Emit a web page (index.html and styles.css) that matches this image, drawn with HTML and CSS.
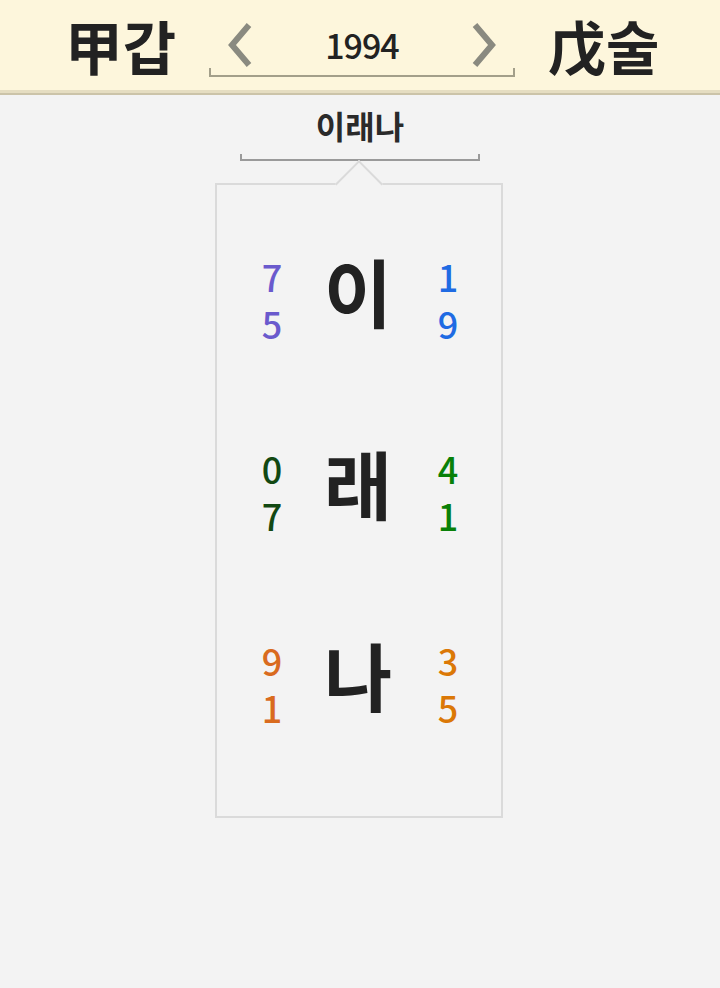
FILE: index.html
```html
<!DOCTYPE html>
<html lang="ko">
<head>
  <meta charset="utf-8">
  <title>이름 풀이</title>
  <link rel="stylesheet" href="styles.css">
</head>
<body>

<!-- Year header -->
<header class="top">
  <div class="ganji">甲갑</div>
  <div class="year-nav">
    <svg class="arrow" width="30" height="46" viewBox="0 0 30 46"><polyline points="24,3 7,23 24,43" /></svg>
    <span class="year">1994</span>
    <svg class="arrow" width="30" height="46" viewBox="0 0 30 46"><polyline points="6,3 23,23 6,43" /></svg>
  </div>
  <div class="ganji">戊술</div>
</header>

<!-- Name -->
<section class="name-block">
  <h1 class="name">이래나</h1>
  <div class="name-bracket"></div>

  <div class="card">
    <span class="notch"></span>

    <div class="row">
      <div class="nums c-purple"><span>7</span><span>5</span></div>
      <div class="char">이</div>
      <div class="nums c-blue"><span>1</span><span>9</span></div>
    </div>

    <div class="row">
      <div class="nums c-darkgreen"><span>0</span><span>7</span></div>
      <div class="char">래</div>
      <div class="nums c-green"><span>4</span><span>1</span></div>
    </div>

    <div class="row">
      <div class="nums c-orange"><span>9</span><span>1</span></div>
      <div class="char">나</div>
      <div class="nums c-amber"><span>3</span><span>5</span></div>
    </div>
  </div>
</section>

</body>
</html>
```

FILE: styles.css
```css
body {
  margin: 0;
  background: #f3f3f3;
  color: #222;
  font-family: "Noto Sans CJK KR", "Noto Sans", sans-serif;
}

/* header */
.top {
  height: 90px;
  background: #fdf6dc;
  border-bottom: 3px solid #e5ddc1;
  box-shadow: 0 2px 0 #cbc3a8;
  display: flex;
  justify-content: center;
  align-items: center;
  gap: 33px;
  padding-left: 4px;
}
.ganji {
  font-size: 58px;
  font-weight: 700;
  line-height: 1;
}
.year-nav {
  position: relative;
  width: 306px;
  height: 58px;
  margin-top: 6px;
  display: flex;
  align-items: center;
  justify-content: space-between;
  padding: 0 16px;
  box-sizing: border-box;
}
.year-nav::after {
  content: "";
  position: absolute;
  left: 0;
  right: 0;
  bottom: 0;
  height: 7px;
  border: 2px solid #a39f8a;
  border-top: none;
}
.arrow {
  margin-top: -6px;
}
.arrow polyline {
  fill: none;
  stroke: #8a8a80;
  stroke-width: 6;
}
.year {
  font-size: 34px;
  font-weight: 500;
  line-height: 1;
  margin-top: -6px;
  letter-spacing: -1px;
}

/* name */
.name-block {
  display: flex;
  flex-direction: column;
  align-items: center;
  padding-top: 12px;
}
.name {
  margin: 0;
  font-size: 32px;
  font-weight: 700;
  line-height: 40px;
  color: #2a2a2a;
}
.name-bracket {
  width: 236px;
  height: 5px;
  border: 2px solid #9a9a9a;
  border-top: none;
  margin-top: 9px;
}

.card {
  position: relative;
  width: 284px;
  margin-top: 22px;
  margin-left: -2px;
  border: 2px solid #dadada;
  padding: 21px 0 34px;
}
.notch {
  position: absolute;
  top: -18px;
  left: 125px;
  width: 32px;
  height: 32px;
  background: #f3f3f3;
  border-top: 2px solid #dadada;
  border-left: 2px solid #dadada;
  transform: rotate(45deg);
}

.row {
  height: 192px;
  display: grid;
  grid-template-columns: 110px 62px 112px;
  align-items: center;
}
.char {
  font-size: 74px;
  font-weight: 700;
  line-height: 1;
  margin-top: -24px;
  display: flex;
  justify-content: center;
  white-space: nowrap;
}
.nums {
  display: flex;
  flex-direction: column;
  align-items: center;
  font-size: 36px;
  font-weight: 500;
  line-height: 47px;
  margin-top: -4px;
}
.nums:last-child {
  padding-left: 6px;
}

.c-purple { color: #6a5acd; }
.c-blue { color: #1f6be3; }
.c-darkgreen { color: #124812; }
.c-green { color: #088008; }
.c-orange { color: #d96b1e; }
.c-amber { color: #db7806; }
```
